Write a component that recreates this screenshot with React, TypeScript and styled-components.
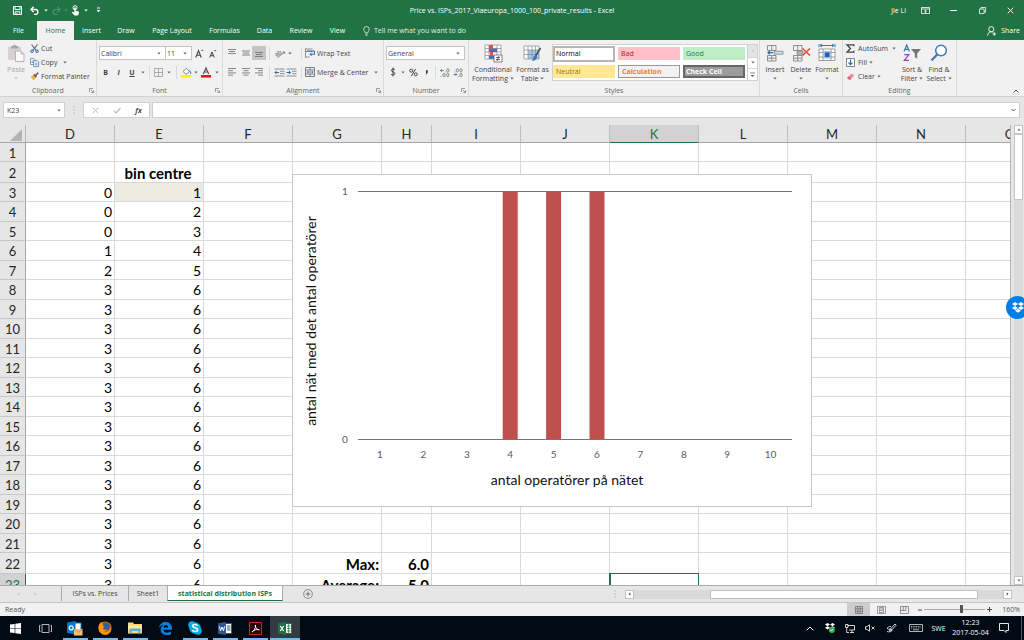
import React from "react";
import styled, { createGlobalStyle, css } from "styled-components";

const UI = '"Open Sans", "Noto Sans", sans-serif';
const SHEET = 'Lato, "Open Sans", sans-serif';
const GREEN = "#217346";

const GlobalStyle = createGlobalStyle`
  * { box-sizing: border-box; }
  body { margin: 0; overflow: hidden; font-family: ${UI}; font-size: 7px; line-height: 9px; color: #444; }
  button, input, select { font: inherit; color: inherit; margin: 0; padding: 0; border: 0; background: none; outline: none; }
  svg { display: block; flex: none; overflow: visible; }
`;

const App = styled.div`
  position: relative;
  display: flex;
  flex-direction: column;
  height: 100vh;
  overflow: hidden;
  background: #e6e6e6;
`;

/* ---------- title bar ---------- */

const TitleBar = styled.header`
  display: grid;
  grid-template-columns: 1fr auto 1fr;
  align-items: center;
  height: 20px;
  flex: none;
  background: ${GREEN};
  color: #fff;
`;
const QuickAccess = styled.div`
  display: flex;
  align-items: center;
  padding-left: 10px;
`;
const WindowControls = styled.div`
  display: flex;
  align-items: center;
  justify-content: flex-end;
`;
const Slot = styled.button<{ $w: number; $on?: boolean }>`
  display: flex;
  align-items: center;
  justify-content: center;
  width: ${(p) => p.$w}px;
  height: 14px;
  flex: none;
  background: ${(p) => (p.$on ? "#c5c5c5" : "transparent")};
`;
const UserName = styled.span`
  margin-right: 5px;
`;

/* ---------- ribbon tabs ---------- */

const TabBar = styled.nav`
  display: flex;
  align-items: flex-end;
  height: 20px;
  flex: none;
  background: ${GREEN};
  color: #fff;
`;
const RibbonTab = styled.button<{ $w: number; $active?: boolean }>`
  width: ${(p) => p.$w}px;
  height: 19px;
  white-space: nowrap;
  ${(p) => p.$active && css`background: #f1f1f1; color: ${GREEN};`}
`;
const TellMe = styled.button`
  display: flex;
  align-items: center;
  gap: 4px;
  height: 19px;
  margin-left: 9px;
  color: #e3efe8;
`;
const Share = styled.button`
  display: flex;
  align-items: center;
  gap: 4px;
  height: 19px;
  margin-left: auto;
  padding-right: 4px;
`;

/* ---------- ribbon ---------- */

const Ribbon = styled.div`
  display: flex;
  height: 57px;
  flex: none;
  background: #f1f1f1;
  border-bottom: 1px solid #d2d2d2;
`;
const Group = styled.section<{ $w: number }>`
  display: flex;
  flex-direction: column;
  width: ${(p) => p.$w}px;
  flex: none;
  padding: 1px 0;
  border-right: 1px solid #dadada;
`;
const GroupBody = styled.div`
  display: flex;
  flex: 1;
  padding-left: 2px;
`;
const GroupLabel = styled.div`
  display: grid;
  grid-template-columns: 10px 1fr 10px;
  align-items: center;
  justify-items: center;
  height: 9px;
  color: #666;
`;
const GroupTitle = styled.span`
  grid-column: 2;
`;
const BigButton = styled.button<{ $w: number; $off?: boolean }>`
  display: flex;
  flex-direction: column;
  align-items: center;
  gap: 3px;
  width: ${(p) => p.$w}px;
  flex: none;
  padding-top: 3px;
  white-space: nowrap;
  color: ${(p) => (p.$off ? "#a6a6a6" : "inherit")};
`;
const BigText = styled.span`
  display: flex;
  flex-direction: column;
  align-items: center;
`;
const BigLine = styled.span`
  display: flex;
  align-items: center;
  gap: 2px;
  height: 9px;
`;
const Stack = styled.div`
  display: flex;
  flex-direction: column;
`;
const SmallButton = styled.button`
  display: flex;
  align-items: center;
  gap: 2px;
  height: 14px;
  white-space: nowrap;
`;
const CaretGap = styled.span<{ $w: number }>`
  display: flex;
  justify-content: flex-end;
  width: ${(p) => p.$w}px;
`;
const ToolRows = styled.div`
  display: flex;
  flex-direction: column;
  gap: 5px;
  padding-top: 5px;
`;
const ToolRow = styled.div`
  display: flex;
  align-items: center;
  height: 14px;
`;
const Divider = styled.span`
  width: 1px;
  height: 13px;
  margin: 0 3px;
  background: #dadada;
`;
const Combo = styled.label<{ $w: number }>`
  display: flex;
  align-items: center;
  width: ${(p) => p.$w}px;
  height: 14px;
  padding: 0 4px 0 1px;
  background: #fff;
  border: 1px solid #c3c3c3;
  & + & { border-left: 0; }
`;
const Select = styled.select`
  flex: 1;
  min-width: 0;
  height: 12px;
  appearance: none;
`;

const Gallery = styled.div`
  display: flex;
  align-self: flex-start;
  margin: 3px 0 0 2px;
  height: 37px;
  background: #fff;
  border: 1px solid #d0d0d0;
`;
const GalleryGrid = styled.div`
  display: grid;
  grid-template-columns: repeat(3, 62px);
  grid-auto-rows: 15px;
  gap: 3px;
  padding: 1px 0;
  align-items: center;
`;
const Swatch = styled.button<{ $bg: string; $fg: string; $line?: string; $bold?: boolean; $thick?: boolean; $selected?: boolean }>`
  height: ${(p) => (p.$selected ? 16 : 13)}px;
  padding-left: ${(p) => (p.$thick ? 1 : 3)}px;
  text-align: left;
  line-height: 8px;
  background: ${(p) => p.$bg};
  color: ${(p) => p.$fg};
  font-weight: ${(p) => (p.$bold ? 700 : 400)};
  border: ${(p) => (p.$line ? `${p.$thick ? 2 : 1}px solid ${p.$line}` : "0")};
`;
const GallerySteps = styled.div`
  display: grid;
  grid-template-rows: repeat(3, 1fr);
  width: 10px;
  margin-left: 2px;
  border-left: 1px solid #d0d0d0;
`;
const Step = styled.button`
  display: grid;
  place-items: center;
  & + & { border-top: 1px solid #d8d8d8; }
  &:first-child { background: #e4e4e4; }
`;
const Collapse = styled.button`
  align-self: flex-end;
  margin: 0 5px 3px auto;
`;

/* ---------- formula bar ---------- */

const FormulaBar = styled.div`
  display: flex;
  align-items: center;
  height: 28px;
  flex: none;
  padding: 0 4px 2px 3px;
`;
const Field = styled.div<{ $w?: number }>`
  display: flex;
  align-items: center;
  ${(p) => (p.$w ? `width: ${p.$w}px;` : "flex: 1;")}
  height: 16px;
  padding: 0 3px;
  background: #fff;
  border: 1px solid #cfcfcf;
`;
const TextBox = styled.input`
  flex: 1;
  min-width: 0;
  height: 12px;
`;
const Dots = styled.span`
  display: flex;
  justify-content: center;
  width: 18px;
`;
const EditButtons = styled.div`
  display: flex;
  align-items: center;
  width: 67px;
  height: 16px;
  margin-right: 2px;
  background: #fff;
  border: 1px solid #cfcfcf;
`;

/* ---------- worksheet ---------- */

const Workspace = styled.div`
  display: flex;
  flex: 1;
  min-height: 0;
`;
const SheetView = styled.main`
  position: relative;
  flex: 1;
  min-width: 0;
  overflow: hidden;
  background: #fff;
  border-right: 1px solid #b5b5b5;
`;
const Grid = styled.table`
  width: 1055px;
  table-layout: fixed;
  border-collapse: separate;
  border-spacing: 0;
  font-family: ${SHEET};
  font-size: 13px;
  line-height: 16px;
  color: #000;
`;
const Corner = styled.td`
  padding: 2px 3px 0 0;
  background: #e6e6e6;
  border-right: 1px solid #b5b5b5;
  border-bottom: 1px solid #a5a5a5;
  & > svg { margin-left: auto; }
`;
const ColHead = styled.th<{ $active?: boolean }>`
  height: 18px;
  padding: 1px 0 0;
  font-weight: 400;
  background: ${(p) => (p.$active ? "#d2d2d2" : "#e6e6e6")};
  color: ${(p) => (p.$active ? GREEN : "#262626")};
  border-right: 1px solid #bdbdbd;
  border-bottom: 1px solid ${(p) => (p.$active ? GREEN : "#a5a5a5")};
`;
const RowHead = styled.th<{ $active?: boolean }>`
  padding: 1px 0 0;
  font-weight: 400;
  background: ${(p) => (p.$active ? "#d2d2d2" : "#e6e6e6")};
  color: ${(p) => (p.$active ? GREEN : "#262626")};
  border-right: 1px solid ${(p) => (p.$active ? GREEN : "#a5a5a5")};
  border-bottom: 1px solid #c8c8c8;
`;
const Row = styled.tr<{ $h: number }>`
  height: ${(p) => p.$h}px;
`;
const Cell = styled.td<{ $align?: string; $bold?: boolean; $shade?: boolean; $active?: boolean }>`
  padding: 1px 2px 0 0;
  text-align: ${(p) => p.$align || "right"};
  font-weight: ${(p) => (p.$bold ? 700 : 400)};
  font-size: ${(p) => (p.$bold ? 15 : 14)}px;
  background: ${(p) => (p.$shade ? "#eeece1" : "#fff")};
  border-right: 1px solid #d9d9d9;
  border-bottom: 1px solid #d9d9d9;
  ${(p) => p.$active && css`box-shadow: inset 1px 0 ${GREEN}, 0 -1px ${GREEN}, -1px -1px ${GREEN}; border-right-color: ${GREEN};`}
`;
const ChartFrame = styled.figure`
  position: absolute;
  left: 292px;
  top: 49px;
  margin: 0;
  background: #fff;
  border: 1px solid #c8c8c8;
`;
const AxisText = styled.text`
  font-family: ${SHEET};
  font-size: 14px;
  text-anchor: middle;
  fill: #111;
`;
const TickText = styled.text`
  font-family: ${SHEET};
  font-size: 10px;
  text-anchor: middle;
  fill: #595959;
`;
const VScroll = styled.div`
  display: flex;
  flex-direction: column;
  width: 13px;
  flex: none;
  padding: 0 1px 0 3px;
`;
const ScrollArrow = styled.button`
  display: grid;
  place-items: center;
  width: 9px;
  height: 9px;
  flex: none;
  background: #fff;
  border: 1px solid #c3c3c3;
`;
const VTrack = styled.div`
  flex: 1;
  background: #dadada;
`;
const VThumb = styled.div`
  height: 15%;
  background: #fff;
  border: 1px solid #c3c3c3;
`;

/* ---------- sheet tabs and status ---------- */

const SheetBar = styled.div`
  display: flex;
  height: 18px;
  flex: none;
  border-top: 1px solid #ababab;
  border-bottom: 1px solid #c6c6c6;
`;
const SheetNav = styled.div`
  display: flex;
  align-items: center;
  gap: 14px;
  width: 61px;
  padding-left: 17px;
`;
const SheetTab = styled.button<{ $w: number; $active?: boolean }>`
  width: ${(p) => p.$w}px;
  height: 15px;
  white-space: nowrap;
  border-left: 1px solid #ababab;
  ${(p) => p.$active && css`
    background: #fff;
    color: ${GREEN};
    font-weight: 700;
    border-right: 1px solid #ababab;
    border-bottom: 1px solid ${GREEN};
  `}
`;
const AddSheet = styled.button`
  margin-left: 20px;
`;
const SplitHandle = styled.span`
  display: flex;
  align-items: center;
  margin: 0 9px 0 auto;
`;
const HScroll = styled.div`
  display: flex;
  align-items: center;
  width: 387px;
  margin-right: 12px;
`;
const HTrack = styled.div`
  display: flex;
  justify-content: flex-end;
  flex: 1;
  height: 9px;
  padding-right: 25px;
  background: #dadada;
`;
const HThumb = styled.div`
  width: 78%;
  background: #fff;
  border: 1px solid #c3c3c3;
`;
const StatusBar = styled.footer`
  display: flex;
  align-items: center;
  height: 13px;
  flex: none;
  padding: 0 4px 0 5px;
  background: #f1f1f1;
  color: #555;
`;
const StatusRight = styled.div`
  display: flex;
  align-items: center;
  height: 13px;
  margin-left: auto;
`;
const ViewButton = styled.button<{ $on?: boolean }>`
  display: grid;
  place-items: center;
  width: 23px;
  height: 13px;
  background: ${(p) => (p.$on ? "#cdcdcd" : "transparent")};
`;
const ZoomRange = styled.input`
  width: 61px;
  height: 9px;
  appearance: none;
  &::-webkit-slider-runnable-track {
    height: 9px;
    background: linear-gradient(#aaa, #aaa) center / 100% 1px no-repeat;
  }
  &::-webkit-slider-thumb {
    appearance: none;
    width: 3px;
    height: 8px;
    background: #555;
  }
`;
const ZoomValue = styled.button`
  margin-left: 8px;
`;

/* ---------- taskbar ---------- */

const Taskbar = styled.div`
  display: flex;
  height: 24px;
  flex: none;
  background: #020b14;
  color: #fff;
`;
const TaskButton = styled.button<{ $running?: boolean; $active?: boolean }>`
  display: grid;
  place-items: center;
  width: 30px;
  background: ${(p) => (p.$active ? "#303b42" : "transparent")};
  ${(p) => p.$running && css`background: linear-gradient(#76b9ed, #76b9ed) center bottom / 25px 2px no-repeat ${p.$active ? "#303b42" : ""};`}
  ${(p) => p.$active && css`background-size: 30px 2px;`}
`;
const Tray = styled.div`
  display: flex;
  align-items: center;
  margin-left: auto;
  padding-right: 2px;
`;
const TrayButton = styled.button<{ $w: number }>`
  display: grid;
  place-items: center;
  width: ${(p) => p.$w}px;
  height: 24px;
`;
const Clock = styled.button`
  width: 43px;
  line-height: 10px;
  text-align: center;
`;
const ShowDesktop = styled.span`
  width: 1px;
  height: 24px;
  margin-left: 5px;
  background: #4d555c;
`;
const DropboxBadge = styled.button`
  position: absolute;
  top: 296px;
  right: -5px;
  display: grid;
  place-items: center;
  width: 23px;
  height: 23px;
  border-radius: 50%;
  background: #007ee5;
`;

/* ---------- drawings ---------- */

type GProps = { w: number; h: number; children: React.ReactNode };
const G = ({ w, h, children }: GProps) => (
  <svg width={w} height={h} viewBox={`0 0 ${w} ${h}`} fill="none" aria-hidden="true">{children}</svg>
);
const Caret = ({ c = "#666" }: { c?: string }) => (
  <G w={4} h={3}><path d="M.3 .5h3.4L2 2.5z" fill={c} /></G>
);
const Launcher = () => (
  <G w={5} h={5}><path d="M.5 4V.5H4M2 2l2.3 2.3M4.6 2.3v2.3H2.3" stroke="#777" strokeWidth=".7" /></G>
);
const Lines = ({ rows }: { rows: [number, number, number][] }) => (
  <G w={10} h={10}>
    {rows.map(([x, y, w]) => <path key={y} d={`M${x} ${y}h${w}`} stroke="#777" strokeWidth=".9" />)}
  </G>
);
const Table = ({ accent }: { accent: React.ReactNode }) => (
  <G w={19} h={18}>
    <path d="M1.5 1.5h8.5v5H1.5zM5.7 1.5v5M1.5 11.5h8.5v5.5H1.5zM1.5 14.2h8.5M5.7 11.5V17" stroke="#777" strokeWidth=".8" />
    {accent}
  </G>
);
const Indent = ({ out }: { out?: boolean }) => (
  <G w={11} h={9}>
    <path d="M.5 1h10M6 3.3h4.5M6 5.6h4.5M.5 8h10" stroke="#777" strokeWidth=".8" />
    <path d={out ? "M5 4.5H1M2.7 2.8L1 4.5l1.7 1.7" : "M.5 4.5h4M2.8 2.8l1.7 1.7-1.7 1.7"} stroke="#2b6cb0" />
  </G>
);

const COLUMNS = ["D", "E", "F", "G", "H", "I", "J", "K", "L", "M", "N", "O"];
const D_VALUES = [0, 0, 0, 1, 2];
const rowHeight = (n: number) => (n === 1 ? 19 : n === 2 || n > 21 ? 21 : n % 2 ? 19 : 20);

type CellData = { text: string | number; align?: string; bold?: boolean; shade?: boolean };
function cellAt(col: string, row: number): CellData {
  if (col === "D" && row > 2) return { text: D_VALUES[row - 3] ?? 3 };
  if (col === "E" && row === 2) return { text: "bin centre", align: "center", bold: true };
  if (col === "E" && row > 2) return { text: Math.min(row - 2, 6), shade: row === 3 };
  if (col === "G" && row === 22) return { text: "Max:", bold: true };
  if (col === "G" && row === 23) return { text: "Average:", bold: true };
  if (col === "H" && row === 22) return { text: "6.0", bold: true };
  if (col === "H" && row === 23) return { text: "5.0", bold: true };
  return { text: "" };
}

const Worksheet = () => (
  <Grid>
    <colgroup>
      <col style={{ width: 26 }} />
      {COLUMNS.map((c) => <col key={c} style={{ width: c === "H" ? 50 : 89 }} />)}
    </colgroup>
    <thead>
      <tr>
        <Corner><G w={12} h={12}><path d="M12 0v12H0z" fill="#b4b4b4" /></G></Corner>
        {COLUMNS.map((c) => <ColHead key={c} $active={c === "K"}>{c}</ColHead>)}
      </tr>
    </thead>
    <tbody>
      {Array.from({ length: 23 }, (_, i) => i + 1).map((r) => (
        <Row key={r} $h={rowHeight(r)}>
          <RowHead $active={r === 23}>{r}</RowHead>
          {COLUMNS.map((c) => {
            const d = cellAt(c, r);
            return (
              <Cell key={c} $align={d.align} $bold={d.bold} $shade={d.shade} $active={c === "K" && r === 23}>
                {d.text}
              </Cell>
            );
          })}
        </Row>
      ))}
    </tbody>
  </Grid>
);

const Chart = () => (
  <ChartFrame>
    <svg width="518" height="331" viewBox="0 0 518 331">
      {[4, 5, 6].map((n) => (
        <rect key={n} x={43.4 * (n - 1) + 79.5} y="16" width="15" height="248" fill="#c0504d" />
      ))}
      <path d="M65 16.5h434M65 264.5h434" stroke="#767676" strokeWidth="1.2" />
      <TickText x="52" y="20">1</TickText>
      <TickText x="52" y="268">0</TickText>
      {Array.from({ length: 10 }, (_, i) => (
        <TickText key={i} x={87 + 43.4 * i} y="283">{i + 1}</TickText>
      ))}
      <AxisText x="274" y="310">antal operatörer på nätet</AxisText>
      <AxisText x="0" y="0" transform="translate(23 146) rotate(-90)">antal nät med det antal operatörer</AxisText>
    </svg>
  </ChartFrame>
);

const TABS: [string, number][] = [
  ["File", 37], ["Home", 37], ["Insert", 35], ["Draw", 34], ["Page Layout", 58],
  ["Formulas", 47], ["Data", 33], ["Review", 40], ["View", 33],
];

export default function ExcelWindow() {
  return (
    <App>
      <GlobalStyle />
      <TitleBar>
        <QuickAccess>
          <Slot $w={15} aria-label="Save"><G w={9} h={9}><path d="M.5.5h8v8h-8zM2 .5v3h5v-3M2.2 8.5V5.7h4.6v2.8M4 7v1.5" stroke="#fff" /></G></Slot>
          <Slot $w={19} aria-label="Undo"><G w={9} h={9}><path d="M1 3.5h4.5a2.4 2.4 0 010 4.8H4M3.6.8L1 3.5l2.6 2.6" stroke="#fff" strokeWidth="1.3" /></G></Slot>
          <Slot $w={3} aria-label="Undo history"><Caret c="#fff" /></Slot>
          <Slot $w={18} aria-label="Redo"><G w={9} h={9}><path d="M8 3.5H3.5a2.4 2.4 0 000 4.8H5M5.4.8L8 3.5 5.4 6.1" stroke="#4f9470" strokeWidth="1.2" /></G></Slot>
          <Slot $w={2} aria-label="Redo history"><Caret c="#4f9470" /></Slot>
          <Slot $w={16} aria-label="Touch mode">
            <G w={9} h={11}><circle cx="4" cy="2.7" r="2" stroke="#fff" /><path d="M3.2 2.5h1.6v3.3l3 .8v2L7 10.5H3.5L.8 7.4l.8-.7 1.6 1z" fill="#fff" /></G>
          </Slot>
          <Slot $w={6} aria-label="Mode list"><Caret c="#fff" /></Slot>
          <Slot $w={18} aria-label="Customize"><G w={5} h={6}><path d="M1 1h3" stroke="#fff" /><path d="M.5 3h4l-2 2.2z" fill="#fff" /></G></Slot>
        </QuickAccess>
        <span>Price vs. ISPs_2017_Viaeuropa_1000_100_private_results  -  Excel</span>
        <WindowControls>
          <UserName>Jie Li</UserName>
          <Slot $w={28} aria-label="Ribbon options"><G w={9} h={7}><path d="M.5.5h8v6h-8zM.5 2h8M4.5 6V3.2M3.2 4.3l1.3-1.2 1.3 1.2" stroke="#fff" strokeWidth=".8" /></G></Slot>
          <Slot $w={29} aria-label="Minimize"><G w={7} h={7}><path d="M0 3.5h7" stroke="#fff" /></G></Slot>
          <Slot $w={28} aria-label="Restore"><G w={7} h={7}><path d="M.5 2h4.6v4.6H.5zM2 2V.5h4.6V5H5" stroke="#fff" strokeWidth=".8" /></G></Slot>
          <Slot $w={28} aria-label="Close"><G w={7} h={7}><path d="M.7.7l5.6 5.6M6.3.7L.7 6.3" stroke="#fff" strokeWidth=".9" /></G></Slot>
        </WindowControls>
      </TitleBar>

      <TabBar>
        {TABS.map(([name, w]) => <RibbonTab key={name} $w={w} $active={name === "Home"}>{name}</RibbonTab>)}
        <TellMe>
          <G w={7} h={10}><path d="M2.2 6.8C2.2 5.5.8 5 .8 3.2a2.7 2.7 0 015.4 0c0 1.8-1.4 2.3-1.4 3.6zM2.3 8.2h2.4M2.7 9.4h1.6" stroke="#e3efe8" strokeWidth=".8" /></G>
          Tell me what you want to do
        </TellMe>
        <Share>
          <G w={10} h={10}><circle cx="4.3" cy="3.2" r="2.6" stroke="#fff" strokeWidth=".9" /><path d="M.6 9.5c.2-2.3 1.5-3.7 3.7-3.7.9 0 1.5.2 2 .5M7.3 6.3v3.4M5.6 8H9" stroke="#fff" strokeWidth=".9" /></G>
          Share
        </Share>
      </TabBar>

      <Ribbon>
        <Group $w={97}>
          <GroupBody>
            <BigButton $w={28} $off>
              <G w={18} h={18}>
                <path d="M1 3h13v13H1z" fill="#d5d0d3" /><path d="M4 4.5V2h2a1.7 1.7 0 013.2 0h2v2.5z" fill="#a9a6a8" />
                <path d="M8.5 7H14l3 3v7.5H8.5z" fill="#fafafa" stroke="#b7b3b5" /><path d="M14 7v3h3" stroke="#b7b3b5" />
              </G>
              <BigText><BigLine>Paste</BigLine><BigLine><Caret c="#bbb" /></BigLine></BigText>
            </BigButton>
            <Stack>
              <SmallButton>
                <G w={9} h={9}><path d="M1.5.5l4.6 5.8M7.5.5L2.9 6.3" stroke="#666" strokeWidth="1.1" /><circle cx="2" cy="7.2" r="1.3" stroke="#2b6cb0" /><circle cx="7" cy="7.2" r="1.3" stroke="#2b6cb0" /></G>
                Cut
              </SmallButton>
              <SmallButton>
                <G w={9} h={9}><path d="M.5.5h3.2l1.5 1.5v4.5H.5zM1.5 3h2.5M1.5 4.5h2.5" fill="#fff" stroke="#6a7f99" strokeWidth=".8" /><path d="M3.7 2.7h3.4l1.5 1.5v4.4H3.7zM5 5.2h2.4M5 6.8h2.4" fill="#fff" stroke="#4a78ad" strokeWidth=".8" /></G>
                Copy<CaretGap $w={8}><Caret /></CaretGap>
              </SmallButton>
              <SmallButton>
                <G w={9} h={9}><path d="M.5 5l3.4-2.4 2.4 2.5L4 8.5z" fill="#e8b04e" /><path d="M4 2.5L6.4 5M5.3 3.7L8.2.8" stroke="#555" strokeWidth="1.6" /></G>
                Format Painter
              </SmallButton>
            </Stack>
          </GroupBody>
          <GroupLabel><GroupTitle>Clipboard</GroupTitle><Launcher /></GroupLabel>
        </Group>

        <Group $w={126}>
          <GroupBody>
            <ToolRows>
              <ToolRow>
                <Combo $w={67}><Select aria-label="Font"><option>Calibri</option></Select><Caret /></Combo>
                <Combo $w={26}><Select aria-label="Font size"><option>11</option></Select><Caret /></Combo>
                <Slot $w={15} aria-label="Grow font"><G w={9} h={9}><path d="M.8 8.5L3.5 1.5l2.7 7M1.7 6.2h3.6" stroke="#444" strokeWidth="1.1" /><path d="M6 2h2.6L7.3.5z" fill="#2b6cb0" /></G></Slot>
                <Slot $w={12} aria-label="Shrink font"><G w={8} h={9}><path d="M.8 8.5L3 3l2.2 5.5M1.6 6.7h2.8" stroke="#444" strokeWidth="1" /><path d="M5 1h2.6L6.3 2.5z" fill="#2b6cb0" /></G></Slot>
              </ToolRow>
              <ToolRow>
                <Slot $w={13}><b>B</b></Slot>
                <Slot $w={13}><i><b>I</b></i></Slot>
                <Slot $w={14}><u><b>U</b></u></Slot>
                <Slot $w={7} aria-label="Underline styles"><Caret /></Slot>
                <Divider />
                <Slot $w={11} aria-label="Borders"><G w={9} h={9}><path d="M.5.5h8v8h-8zM4.5.5v8M.5 4.5h8" stroke="#999" strokeWidth=".8" /></G></Slot>
                <Slot $w={9} aria-label="Border styles"><Caret /></Slot>
                <Divider />
                <Slot $w={12} aria-label="Fill color"><G w={11} h={11}><path d="M2 4.5L5.3 1.3l3.2 3.2-3.4 2.8z" fill="#fff" stroke="#666" strokeWidth=".8" /><path d="M8.2 3.8c1.5.6 1.8 1.8 1.4 3" stroke="#2b6cb0" /><path d="M0 8h10v2.6H0z" fill="#fff200" /></G></Slot>
                <Slot $w={7} aria-label="Fill colors"><Caret /></Slot>
                <Slot $w={14} aria-label="Font color"><G w={10} h={11}><path d="M2.3 7L5 .9 7.7 7M3.2 5h3.6" stroke="#555" strokeWidth="1.2" /><path d="M0 8h10v2.6H0z" fill="#e81123" /></G></Slot>
                <Slot $w={7} aria-label="Font colors"><Caret /></Slot>
              </ToolRow>
            </ToolRows>
          </GroupBody>
          <GroupLabel><GroupTitle>Font</GroupTitle><Launcher /></GroupLabel>
        </Group>

        <Group $w={161}>
          <GroupBody>
            <ToolRows>
              <ToolRow>
                <Slot $w={14} aria-label="Top align"><Lines rows={[[1, 1.5, 8], [2, 3.5, 6], [1, 5.5, 8]]} /></Slot>
                <Slot $w={13} aria-label="Middle align"><Lines rows={[[1, 3, 8], [2, 5, 6], [1, 7, 8]]} /></Slot>
                <Slot $w={14} $on aria-label="Bottom align"><Lines rows={[[1, 4.5, 8], [2, 6.5, 6], [1, 8.5, 8]]} /></Slot>
                <Divider />
                <Slot $w={14} aria-label="Orientation"><G w={11} h={9}><text x="0" y="6" fontSize="6" fill="#444" transform="rotate(-30 4 5)">ab</text><path d="M2.5 8.5L9.5 3M7.6 3h2v1.8" stroke="#666" strokeWidth=".8" /></G></Slot>
                <Slot $w={5} aria-label="Orientations"><Caret /></Slot>
                <Slot $w={6} aria-hidden="true" tabIndex={-1} />
                <Divider />
                <SmallButton>
                  <G w={10} h={10}><path d="M.5.5v9M.5 1h7M.5 3.5h7M.5 9h4" stroke="#777" strokeWidth=".8" /><path d="M2 3h7.5v3.3H5M6.6 4.7L5 6.3l1.600 1.600" stroke="#2b6cb0" /></G>
                  Wrap Text
                </SmallButton>
              </ToolRow>
              <ToolRow>
                <Slot $w={14} aria-label="Align left"><Lines rows={[[1, 1.5, 8], [1, 3.7, 5], [1, 5.9, 8], [1, 8.1, 5]]} /></Slot>
                <Slot $w={13} aria-label="Center"><Lines rows={[[1, 1.5, 8], [2.5, 3.7, 5], [1, 5.9, 8], [2.5, 8.1, 5]]} /></Slot>
                <Slot $w={14} aria-label="Align right"><Lines rows={[[1, 1.5, 8], [4, 3.7, 5], [1, 5.9, 8], [4, 8.1, 5]]} /></Slot>
                <Divider />
                <Slot $w={12} aria-label="Decrease indent"><Indent out /></Slot>
                <Slot $w={13} aria-label="Increase indent"><Indent /></Slot>
                <Divider />
                <SmallButton>
                  <G w={10} h={10}><path d="M.5.5h9v9h-9zM.5 3h9M.5 7h9M5 .5V3M5 7v2.500" stroke="#666" strokeWidth=".8" /><path d="M2 5h6M3.200 4L2 5l1.200 1M6.800 4L8 5 6.800 6" stroke="#2b6cb0" strokeWidth=".8" /></G>
                  Merge &amp; Center<CaretGap $w={8}><Caret /></CaretGap>
                </SmallButton>
              </ToolRow>
            </ToolRows>
          </GroupBody>
          <GroupLabel><GroupTitle>Alignment</GroupTitle><Launcher /></GroupLabel>
        </Group>

        <Group $w={85}>
          <GroupBody>
            <ToolRows>
              <ToolRow><Combo $w={79}><Select aria-label="Number format"><option>General</option></Select><Caret /></Combo></ToolRow>
              <ToolRow>
                <Slot $w={14} aria-label="Accounting format"><G w={6} h={10}><path d="M5 2.6C4.4 1.9 1.3 1.7 1.3 3.4c0 1.8 3.7 1.2 3.7 3.1 0 1.8-3.3 1.7-4 .8M3 .5v9" stroke="#444" /></G></Slot>
                <Slot $w={6} aria-label="Currencies"><Caret /></Slot>
                <Slot $w={14} aria-label="Percent style"><G w={9} h={9}><circle cx="2.2" cy="2.7" r="1.5" stroke="#444" /><circle cx="6.8" cy="6.3" r="1.5" stroke="#444" /><path d="M6.6 1L2.4 8" stroke="#444" /></G></Slot>
                <Slot $w={12} aria-label="Comma style"><G w={3} h={5}><path d="M1 .5h1.500v2L1 4.500" fill="#444" stroke="#444" strokeWidth=".6" /></G></Slot>
                <Divider />
                <Slot $w={12} aria-label="Increase decimal"><G w={10} h={9}><path d="M3.8 2.5H.5M1.8 1.2L.5 2.5l1.3 1.3" stroke="#2b6cb0" strokeWidth=".8" /><path d="M5.600 3.600v.8M1 8v.8" stroke="#666" strokeWidth=".8" /><ellipse cx="7.800" cy="2.400" rx="1.100" ry="1.700" stroke="#666" strokeWidth=".7" /><ellipse cx="4" cy="7" rx="1.100" ry="1.700" stroke="#666" strokeWidth=".7" /><ellipse cx="7.800" cy="7" rx="1.100" ry="1.700" stroke="#666" strokeWidth=".7" /></G></Slot>
                <Slot $w={14} aria-label="Decrease decimal"><G w={10} h={9}><path d="M.5 6.5h3.3M2.5 5.2l1.3 1.3-1.3 1.3" stroke="#2b6cb0" strokeWidth=".8" /><path d="M1.500 3.600v.8M5.600 8v.8" stroke="#666" strokeWidth=".8" /><ellipse cx="4.300" cy="2.400" rx="1.100" ry="1.700" stroke="#666" strokeWidth=".7" /><ellipse cx="8" cy="2.400" rx="1.100" ry="1.700" stroke="#666" strokeWidth=".7" /><ellipse cx="8" cy="7" rx="1.100" ry="1.700" stroke="#666" strokeWidth=".7" /></G></Slot>
              </ToolRow>
            </ToolRows>
          </GroupBody>
          <GroupLabel><GroupTitle>Number</GroupTitle><Launcher /></GroupLabel>
        </Group>

        <Group $w={291}>
          <GroupBody>
            <BigButton $w={44}>
              <G w={19} h={18}>
                <path d="M1 1h16v14H1zM1 4.5h16M1 8h16M1 11.5h16M5 1v14M13 1v14" fill="#fff" stroke="#888" strokeWidth=".7" />
                <path d="M5 1h4v3.5H5zM6 8h3v3.5H6z" fill="#d9534f" /><path d="M5 4.5h8V8H5zM5 11.5h5V15H5z" fill="#4472b8" />
                <path d="M10 11h8v7h-8z" fill="#fff" stroke="#666" strokeWidth=".8" /><path d="M12 13.5h4M12 15.5h4M15 12l-2 5" stroke="#444" strokeWidth=".8" />
              </G>
              <BigText><BigLine>Conditional</BigLine><BigLine>Formatting<Caret /></BigLine></BigText>
            </BigButton>
            <BigButton $w={35}>
              <G w={19} h={18}>
                <path d="M1 2h15v13H1z" fill="#fff" /><path d="M5 6h11v9H5z" fill="#a9c7e8" />
                <path d="M1 2h15v13H1zM1 6h15M1 10.5h15M5 2v13M9 2v13M12.5 2v13" stroke="#7d8b99" strokeWidth=".7" />
                <path d="M17.5 4l-5 8" stroke="#555" strokeWidth="1.8" /><path d="M12.7 11c1 .5 1.5 1.2 1.2 2.5-.5 2-2.5 3.5-5 3.5 1.5-1.3.8-4.8 3.8-6z" fill="#3a73b8" />
              </G>
              <BigText><BigLine>Format as</BigLine><BigLine>Table<Caret /></BigLine></BigText>
            </BigButton>
            <Gallery>
              <GalleryGrid>
                <Swatch $bg="#fff" $fg="#000" $line="#b5b5b5" $thick $selected>Normal</Swatch>
                <Swatch $bg="#ffc0c8" $fg="#9c2030">Bad</Swatch>
                <Swatch $bg="#bdeec6" $fg="#1b7a2c">Good</Swatch>
                <Swatch $bg="#ffe793" $fg="#9c6a10">Neutral</Swatch>
                <Swatch $bg="#f2f2f2" $fg="#f08030" $line="#999" $bold>Calculation</Swatch>
                <Swatch $bg="#9c9c9c" $fg="#fff" $line="#666" $bold $thick>Check Cell</Swatch>
              </GalleryGrid>
              <GallerySteps>
                <Step aria-label="Previous styles"><G w={4} h={3}><path d="M.5 2.5h3L2 .8z" fill="#bbb" /></G></Step>
                <Step aria-label="Next styles"><Caret /></Step>
                <Step aria-label="More styles"><G w={5} h={6}><path d="M0 1h5" stroke="#666" strokeWidth=".8" /><path d="M.5 3h4l-2 2z" fill="#666" /></G></Step>
              </GallerySteps>
            </Gallery>
          </GroupBody>
          <GroupLabel><GroupTitle>Styles</GroupTitle></GroupLabel>
        </Group>

        <Group $w={83}>
          <GroupBody>
            <BigButton $w={26}>
              <Table accent={<><path d="M8 7.2h9v3H8z" fill="#c9dcf0" stroke="#777" strokeWidth=".7" /><path d="M7 8.7H2M3.8 7L2 8.7l1.8 1.7" stroke="#2b6cb0" strokeWidth="1.2" /></>} />
              <BigText><BigLine>Insert</BigLine><BigLine><Caret /></BigLine></BigText>
            </BigButton>
            <BigButton $w={26}>
              <Table accent={<><path d="M5 7.2h6v3H5z" fill="#bbb" stroke="#777" strokeWidth=".7" /><path d="M10.5 4.5l7.5 7M18 4.5l-7.5 7" stroke="#e04f39" strokeWidth="1.7" /></>} />
              <BigText><BigLine>Delete</BigLine><BigLine><Caret /></BigLine></BigText>
            </BigButton>
            <BigButton $w={26}>
              <G w={18} h={18}>
                <path d="M1 5h16v11.5H1zM1 8.5h16M1 13h16M5 5v11.5M13 5v11.5" fill="#fff" stroke="#888" strokeWidth=".8" />
                <path d="M5.5 7h7v7.5h-7z" fill="#9fc0e4" /><path d="M7 8.5h4.5V13H7z" fill="#1f5fae" />
                <path d="M2 1.5h14M4 0L2 1.5 4 3M14 0l2 1.5L14 3M1 0v3.2M17 0v3.2" stroke="#2b6cb0" strokeWidth=".9" />
              </G>
              <BigText><BigLine>Format</BigLine><BigLine><Caret /></BigLine></BigText>
            </BigButton>
          </GroupBody>
          <GroupLabel><GroupTitle>Cells</GroupTitle></GroupLabel>
        </Group>

        <Group $w={114}>
          <GroupBody>
            <Stack>
              <SmallButton>
                <G w={11} h={9}><path d="M8.8 2.2V.8H2l3.4 3.7L2 8.2h6.8V6.8" stroke="#444" strokeWidth="1.3" /></G>
                AutoSum<CaretGap $w={6}><Caret /></CaretGap>
              </SmallButton>
              <SmallButton>
                <G w={11} h={9}><path d="M1.5.5h8v8h-8z" fill="#fff" stroke="#666" strokeWidth=".8" /><path d="M5.5 1.5v5M3.5 4.7l2 2 2-2" stroke="#2b6cb0" strokeWidth="1.2" /></G>
                Fill<Caret />
              </SmallButton>
              <SmallButton>
                <G w={11} h={9}><path d="M2 6L6.5 1.5l2.7 2L5 8z" fill="#f08a9c" /><path d="M2 6L3.5 4.5l2.7 2L5 8z" fill="#d95f76" /></G>
                Clear<Caret />
              </SmallButton>
            </Stack>
            <BigButton $w={32}>
              <G w={18} h={18}>
                <path d="M1 7.5L3.7 1l2.7 6.5M1.9 5.4h3.6" stroke="#3a73b8" strokeWidth="1.2" />
                <path d="M1.3 10.6h4.6L1.3 16.3H6" stroke="#9045b5" strokeWidth="1.2" />
                <path d="M8 5h10l-3.8 4.5v5.2l-2.4-1.6V9.5z" fill="#777" />
              </G>
              <BigText><BigLine>Sort &amp;</BigLine><BigLine>Filter<Caret /></BigLine></BigText>
            </BigButton>
            <BigButton $w={22}>
              <G w={18} h={18}><circle cx="11" cy="6.5" r="5.3" fill="#fff" stroke="#3f78bd" strokeWidth="1.5" /><path d="M7.2 10.5L1.5 16.5" stroke="#3f78bd" strokeWidth="2.3" /></G>
              <BigText><BigLine>Find &amp;</BigLine><BigLine>Select<Caret /></BigLine></BigText>
            </BigButton>
          </GroupBody>
          <GroupLabel><GroupTitle>Editing</GroupTitle></GroupLabel>
        </Group>
        <Collapse aria-label="Collapse ribbon"><G w={6} h={4}><path d="M.7 3.3L3 1l2.3 2.3" stroke="#555" /></G></Collapse>
      </Ribbon>

      <FormulaBar>
        <Field $w={62}><TextBox aria-label="Name box" defaultValue="K23" /><Caret /></Field>
        <Dots><G w={2} h={8}><path d="M1 .5v1M1 3.5v1M1 6.5v1" stroke="#999" /></G></Dots>
        <EditButtons>
          <Slot $w={22} aria-label="Cancel"><G w={7} h={7}><path d="M.8.8l5.4 5.4M6.2.8L.8 6.2" stroke="#bbb" /></G></Slot>
          <Slot $w={22} aria-label="Enter"><G w={8} h={7}><path d="M.7 3.8L3 6l4.5-5" stroke="#bbb" strokeWidth="1.2" /></G></Slot>
          <Slot $w={21} aria-label="Insert function"><i><b>fx</b></i></Slot>
        </EditButtons>
        <Field><TextBox aria-label="Formula" /><G w={5} h={4}><path d="M.5 1l2 2 2-2" stroke="#555" /></G></Field>
      </FormulaBar>

      <Workspace>
        <SheetView><Worksheet /><Chart /></SheetView>
        <VScroll>
          <ScrollArrow aria-label="Scroll up"><G w={4} h={3}><path d="M.3 2.5h3.4L2 .5z" fill="#666" /></G></ScrollArrow>
          <VTrack><VThumb /></VTrack>
          <ScrollArrow aria-label="Scroll down"><Caret /></ScrollArrow>
        </VScroll>
      </Workspace>

      <SheetBar>
        <SheetNav>
          <G w={3} h={4}><path d="M2.3.5v3L.6 2z" fill="#bbb" /></G>
          <G w={3} h={4}><path d="M.6.5v3L2.3 2z" fill="#bbb" /></G>
        </SheetNav>
        <SheetTab $w={67}>ISPs vs. Prices</SheetTab>
        <SheetTab $w={39}>Sheet1</SheetTab>
        <SheetTab $w={116} $active>statistical distribution ISPs</SheetTab>
        <AddSheet aria-label="New sheet"><G w={10} h={10}><circle cx="5" cy="5" r="4.4" stroke="#777" strokeWidth=".8" /><path d="M5 2.7v4.6M2.7 5h4.6" stroke="#777" /></G></AddSheet>
        <SplitHandle><G w={2} h={8}><path d="M1 .5v1M1 3.5v1M1 6.5v1" stroke="#999" /></G></SplitHandle>
        <HScroll>
          <ScrollArrow aria-label="Scroll left"><G w={3} h={4}><path d="M2.3.3v3.4L.5 2z" fill="#555" /></G></ScrollArrow>
          <HTrack><HThumb /></HTrack>
          <ScrollArrow aria-label="Scroll right"><G w={3} h={4}><path d="M.7.3v3.4L2.5 2z" fill="#555" /></G></ScrollArrow>
        </HScroll>
      </SheetBar>

      <StatusBar>
        Ready
        <StatusRight>
          <ViewButton $on aria-label="Normal view"><G w={8} h={8}><path d="M.5.5h7v7h-7zM.5 2.8h7M.5 5.2h7M2.8.5v7M5.2.5v7" stroke="#666" strokeWidth=".7" /></G></ViewButton>
          <ViewButton aria-label="Page layout view"><G w={9} h={8}><path d="M.5.5h8v7h-8zM2.5 1.5h4v5h-4zM3 3h3M3 4.5h3" stroke="#777" strokeWidth=".7" /></G></ViewButton>
          <ViewButton aria-label="Page break view"><G w={9} h={8}><path d="M.5.5h8v7h-8zM3.2.5v4M5.8.5v4M.5 4.5h5.3" stroke="#777" strokeWidth=".8" /></G></ViewButton>
          <Slot $w={8} aria-label="Zoom out"><G w={4} h={4}><path d="M0 2h4" stroke="#444" /></G></Slot>
          <ZoomRange type="range" min={0} max={100} defaultValue={62} aria-label="Zoom" />
          <Slot $w={9} aria-label="Zoom in"><G w={5} h={5}><path d="M0 2.5h5M2.5 0v5" stroke="#444" /></G></Slot>
          <ZoomValue>160%</ZoomValue>
        </StatusRight>
      </StatusBar>

      <Taskbar>
        <TaskButton aria-label="Start"><G w={11} h={11}><path d="M0 1.6l4.7-.7v4.3H0zM5.3.8L11 0v5.2H5.3zM0 5.8h4.7v4.3L0 9.4zM5.3 5.8H11V11l-5.7-.8z" fill="#fff" /></G></TaskButton>
        <TaskButton aria-label="Task view"><G w={13} h={9}><path d="M3 .5h7v8H3zM1.5 1.5h-1v6h1M11.5 1.5h1v6h-1" stroke="#ddd" strokeWidth=".8" /></G></TaskButton>
        <TaskButton $running aria-label="Outlook">
          <G w={16} h={15}><path d="M7 2h7v9H7z" fill="#fff" stroke="#0078c8" /><path d="M0 1.5L8.5 0v13.5L0 12z" fill="#0078c8" /><circle cx="4.2" cy="6.8" r="2" stroke="#fff" strokeWidth="1.2" /><path d="M7 8h8.5v6.5H7z" fill="#f3c27a" /><path d="M7 8l4.2 3.4L15.5 8" stroke="#b9772c" strokeWidth=".8" /></G>
        </TaskButton>
        <TaskButton $running aria-label="Firefox">
          <G w={14} h={14}><circle cx="7" cy="7" r="6.6" fill="#e66000" /><circle cx="7.6" cy="5.8" r="4.2" fill="#2a5ea8" /><path d="M1 4C2 1.5 3 1.2 3.4 1c0 1 .8 1.6 2 2L4.6 5c1.2 0 2 .5 1.6 1.2L4.8 7c.7 1.8 2.4 2 4 1.2-.5 1.6-2 2.5-3.7 2.2 4 1.6 7.2-1 7.4-4.5 1.6 4-1.5 7.8-5.5 7.8C2.5 13.7-.7 9 1 4z" fill="#ff9500" /></G>
        </TaskButton>
        <TaskButton $running aria-label="File Explorer">
          <G w={14} h={12}><path d="M0 .5h5l1 1.5h8v9.500H0z" fill="#f6d77a" /><path d="M0 3.5h14v4H0z" fill="#ffe9a2" /><path d="M1.5 6.5h11v5h-2V9h-7v2.500h-2z" fill="#5aaee0" /></G>
        </TaskButton>
        <TaskButton aria-label="Edge">
          <G w={13} h={13}><path d="M0 6C.7 1.8 3.5 0 6.7 0 10.7 0 13 3 13 6.500v1.3H4.400c.2 3.300 5 3.600 7.600 1.800v2.600c-4.500 2.200-10.300.4-10.300-4.700 0-2.300 1.300-3.800 3-4.800C3 3 1 4 0 6zm4.500-.6h4.600c0-3.200-4.300-3-4.600 0z" fill="#0b7fda" /></G>
        </TaskButton>
        <TaskButton $running aria-label="Skype">
          <G w={14} h={14}><circle cx="7" cy="7" r="5.8" fill="#00aff0" /><circle cx="4" cy="4" r="3.7" fill="#00aff0" /><circle cx="10" cy="10" r="3.700" fill="#00aff0" /><path d="M9.500 4.700C8.800 3 4.700 3 4.700 5c0 2.300 5 1.200 5 3.700 0 2.300-4.700 2.100-5.300.2" stroke="#fff" strokeWidth="1.500" /></G>
        </TaskButton>
        <TaskButton $running aria-label="Word">
          <G w={14} h={13}><path d="M7 1.500h6.500v10H7z" fill="#fff" stroke="#2b579a" /><path d="M9 4h3.500M9 6h3.500M9 8h3.500" stroke="#2b579a" /><path d="M0 1.300L8 0v13l-8-1.300z" fill="#2b579a" /><path d="M1.500 4.300l1 4.500L4 5l1.500 3.800 1-4.500" stroke="#fff" /></G>
        </TaskButton>
        <TaskButton $running aria-label="Acrobat Reader">
          <G w={13} h={13}><path d="M.5.5h12v12H.5z" fill="#2c0606" stroke="#c3282a" /><path d="M3 10c2-1 4-4.500 3.500-7-.8 0 .5 5 3.800 4.800C9 7 5 7.500 3 10z" stroke="#fff" strokeWidth=".9" /></G>
        </TaskButton>
        <TaskButton $running $active aria-label="Excel">
          <G w={14} h={13}><path d="M7 1.500h6.500v10H7z" fill="#fff" stroke="#1e7145" /><path d="M9 4h3.500M9 6.500h3.500M9 9h3.500M10.700 2v9" stroke="#1e7145" strokeWidth=".8" /><path d="M0 1.300L8 0v13l-8-1.300z" fill="#1e7145" /><path d="M2.300 4l3.400 5M5.700 4L2.300 9" stroke="#fff" strokeWidth="1.200" /></G>
        </TaskButton>
        <Tray>
          <TrayButton $w={20} aria-label="Hidden icons"><G w={8} h={5}><path d="M.7 4.300L4 1l3.300 3.300" stroke="#fff" /></G></TrayButton>
          <TrayButton $w={20} aria-label="Dropbox"><G w={10} h={10}><path d="M2.500 0L5 1.600 2.500 3.200 0 1.600zM7.500 0L10 1.600 7.500 3.200 5 1.600zM2.500 3.200L5 4.800 2.500 6.400 0 4.800zM7.500 3.200L10 4.800 7.500 6.400 5 4.800z" fill="#fff" /><circle cx="6.800" cy="7" r="3" fill="#2fb457" /><path d="M5.400 7l1 1 1.800-2" stroke="#fff" strokeWidth=".8" /></G></TrayButton>
          <TrayButton $w={20} aria-label="Network"><G w={10} h={9}><path d="M2.500 1.500h7v4.500H4M5 8.500h4M7 6v2.500M.5.5h2.500v3H.5zM1.700 3.500v5H4" stroke="#fff" strokeWidth=".8" /></G></TrayButton>
          <TrayButton $w={19} aria-label="Volume"><G w={10} h={8}><path d="M.5 2.700h1.500l2.500-2v6.600L2 5.300H.5zM6.500 2.500l3 3M9.500 2.500l-3 3" stroke="#fff" strokeWidth=".8" /></G></TrayButton>
          <TrayButton $w={24} aria-label="Pen"><G w={11} h={10}><path d="M4 6.500l5-5.500 1.200 1.200-5 5.300-1.700.5zM5 3.500c-2-.5-4 1-3.500 2.300.5 1 4-.5 4.500 1.200.3 1.500-3 2.500-5 1.500" stroke="#fff" strokeWidth=".8" /></G></TrayButton>
          <TrayButton $w={25} aria-label="Keyboard"><G w={14} h={8}><path d="M.5.5h13v7H.5z" stroke="#ddd" strokeWidth=".8" /><path d="M2 2.500h10M2 4h10" stroke="#ddd" strokeWidth=".8" strokeDasharray="1 .7" /><path d="M4 5.800h6" stroke="#ddd" strokeWidth=".8" /></G></TrayButton>
          <TrayButton $w={21}>SWE</TrayButton>
          <Clock>12:23<br />2017-05-04</Clock>
          <TrayButton $w={24} aria-label="Notifications"><G w={10} h={10}><path d="M.5.500h9v7H7v2l-2-2H.5z" stroke="#fff" strokeWidth=".9" /></G></TrayButton>
          <ShowDesktop />
        </Tray>
      </Taskbar>

      <DropboxBadge aria-label="Dropbox badge">
        <G w={12} h={11}><path d="M3 0l3 2-3 2-3-2zM9 0l3 2-3 2-3-2zM3 4l3 2-3 2-3-2zM9 4l3 2-3 2-3-2zM3 8.700l3-2 3 2-3 2z" fill="#fff" /></G>
      </DropboxBadge>
    </App>
  );
}
